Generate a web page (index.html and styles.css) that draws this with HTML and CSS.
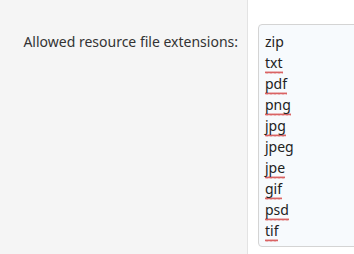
FILE: index.html
```html
<!DOCTYPE html>
<html>
<head>
  <meta charset="UTF-8">
  <title>Resource settings</title>
  <link rel="stylesheet" href="styles.css">
</head>
<body>
  <div class="form-row">
    <div class="label-col">
      <label for="extensions">Allowed resource file extensions:</label>
    </div>
    <div class="field-col">
      <div class="ext-box" id="extensions">
        <div>zip</div>
        <div><span class="typo">txt</span></div>
        <div><span class="typo">pdf</span></div>
        <div><span class="typo">png</span></div>
        <div><span class="typo">jpg</span></div>
        <div>jpeg</div>
        <div><span class="typo">jpe</span></div>
        <div><span class="typo">gif</span></div>
        <div><span class="typo">psd</span></div>
        <div><span class="typo">tif</span></div>
      </div>
    </div>
  </div>
</body>
</html>
```

FILE: styles.css
```css
html, body {
  margin: 0;
  height: 100%;
  overflow: hidden;
}

body {
  background-color: #f5f5f5;
  font-family: "Noto Sans", "Open Sans", sans-serif;
  font-size: 14px;
  color: #333;
}

.form-row {
  display: flex;
  height: 100%;
}

.label-col {
  width: 248px;
  flex-shrink: 0;
  border-right: 1px solid #e3e3e3;
  padding-top: 31px;
  padding-right: 9px;
  box-sizing: border-box;
  text-align: right;
  line-height: 21px;
}

.field-col {
  flex: 1;
  background-color: #fff;
  padding: 24px 0 0 10px;
  min-width: 0;
  overflow: hidden;
}

.ext-box {
  width: calc(100% + 20px);
  border: 1px solid #d4d4d4;
  border-radius: 4px;
  background-color: #f7fafd;
  padding: 6px 6px 5px;
  line-height: 21px;
  color: #222;
}

/* spell-check squiggle */
.typo {
  padding-bottom: 3px;
  background-image: url("data:image/svg+xml,%3Csvg xmlns='http://www.w3.org/2000/svg' width='4' height='3'%3E%3Cpath d='M0 2.5 L1 0.5 L2 2.5 L3 0.5 L4 2.5' fill='none' stroke='%23d23c3c' stroke-width='0.8'/%3E%3C/svg%3E");
  background-repeat: repeat-x;
  background-position: left bottom 1px;
  background-size: 4px 3px;
}
```
